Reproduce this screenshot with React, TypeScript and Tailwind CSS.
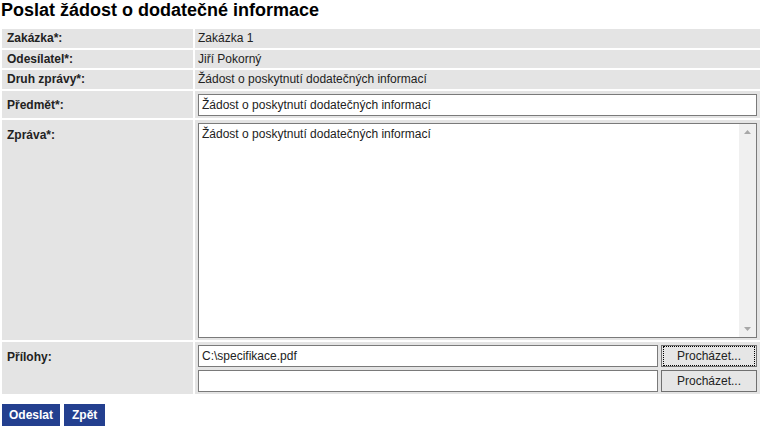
import React from "react";

const labelCls = "bg-[#e4e4e4] font-bold align-top pl-[5px] pr-2 text-left p-0";
const valueCls = "bg-[#e4e4e4] align-top pl-[3px] pr-[2px] p-0";

function BrowseBtn({ focused }: { focused?: boolean }) {
  return (
    <button
      className="w-[96px] h-[22px] ml-[3px] shrink-0 border border-[#707070] bg-[#e6e6e6] text-[12px] text-[#222] flex items-center justify-center"
      style={{ fontFamily: "'Liberation Sans', Arial, sans-serif" }}
    >
      <span className={focused ? "outline-1 outline-dotted outline-black w-[90px] h-[18px] flex items-center justify-center" : ""}>
        Procházet...
      </span>
    </button>
  );
}

export default function App() {
  return (
    <div
      className="w-[764px] h-[427px] bg-white text-[12px] text-[#222] overflow-hidden"
      style={{ fontFamily: "'Liberation Sans', Arial, sans-serif" }}
    >
      <h1 className="text-[18px] font-bold text-black leading-[20px] pl-[1px] pt-0">
        Poslat žádost o dodatečné informace
      </h1>
      <table className="border-separate border-spacing-[2px] w-[762px] mt-[7px] ml-0">
        <tbody>
          <tr>
            <td className={labelCls + " w-[191px] h-[19px] leading-[19px]"}>Zakázka*:</td>
            <td className={valueCls + " h-[19px] leading-[19px]"}>Zakázka 1</td>
          </tr>
          <tr>
            <td className={labelCls + " h-[18px] leading-[18px]"}>Odesílatel*:</td>
            <td className={valueCls + " h-[18px] leading-[18px]"}>Jiří Pokorný</td>
          </tr>
          <tr>
            <td className={labelCls + " h-[19px] leading-[19px]"}>Druh zprávy*:</td>
            <td className={valueCls + " h-[19px] leading-[19px]"}>Žádost o poskytnutí dodatečných informací</td>
          </tr>
          <tr>
            <td className={labelCls + " pt-[5px]"}>Předmět*:</td>
            <td className={valueCls + " pt-[3px] pb-[2px]"}>
              <div className="h-[22px] w-[559px] border border-[#7a7a7a] bg-white leading-[20px] pl-[3px]">
                Žádost o poskytnutí dodatečných informací
              </div>
            </td>
          </tr>
          <tr>
            <td className={labelCls + " pt-[6px]"}>Zpráva*:</td>
            <td className={valueCls + " pt-[3px] pb-[2px]"}>
              <div className="h-[215px] w-[559px] border border-[#7a7a7a] bg-white flex">
                <div className="flex-1 pl-[3px] pt-[3px] leading-[14px]">
                  Žádost o poskytnutí dodatečných informací
                </div>
                <div className="w-[17px] bg-[#f0f0f0] flex flex-col justify-between items-center py-[6px]">
                  <svg width="7" height="4" viewBox="0 0 7 4"><path d="M0 4 L3.5 0 L7 4 Z" fill="#a8a8a8" /></svg>
                  <svg width="7" height="4" viewBox="0 0 7 4"><path d="M0 0 L3.5 4 L7 0 Z" fill="#a8a8a8" /></svg>
                </div>
              </div>
            </td>
          </tr>
          <tr>
            <td className={labelCls + " pt-[6px]"}>Přílohy:</td>
            <td className={valueCls + " pt-[3px] pb-[2px]"}>
              <div className="flex flex-col gap-[3px]">
                <div className="flex">
                  <div className="h-[22px] w-[460px] border border-[#7a7a7a] bg-white leading-[20px] pl-[3px]">
                    C:\specifikace.pdf
                  </div>
                  <BrowseBtn focused />
                </div>
                <div className="flex">
                  <div className="h-[22px] w-[460px] border border-[#7a7a7a] bg-white" />
                  <BrowseBtn />
                </div>
              </div>
            </td>
          </tr>
        </tbody>
      </table>
      <div className="flex gap-[4px] pl-[2px] mt-[8px]">
        <button className="h-[22px] px-[7px] bg-[#233f8f] text-white font-bold text-[12px] leading-[22px]">Odeslat</button>
        <button className="h-[22px] px-[8px] bg-[#233f8f] text-white font-bold text-[12px] leading-[22px]">Zpět</button>
      </div>
    </div>
  );
}
